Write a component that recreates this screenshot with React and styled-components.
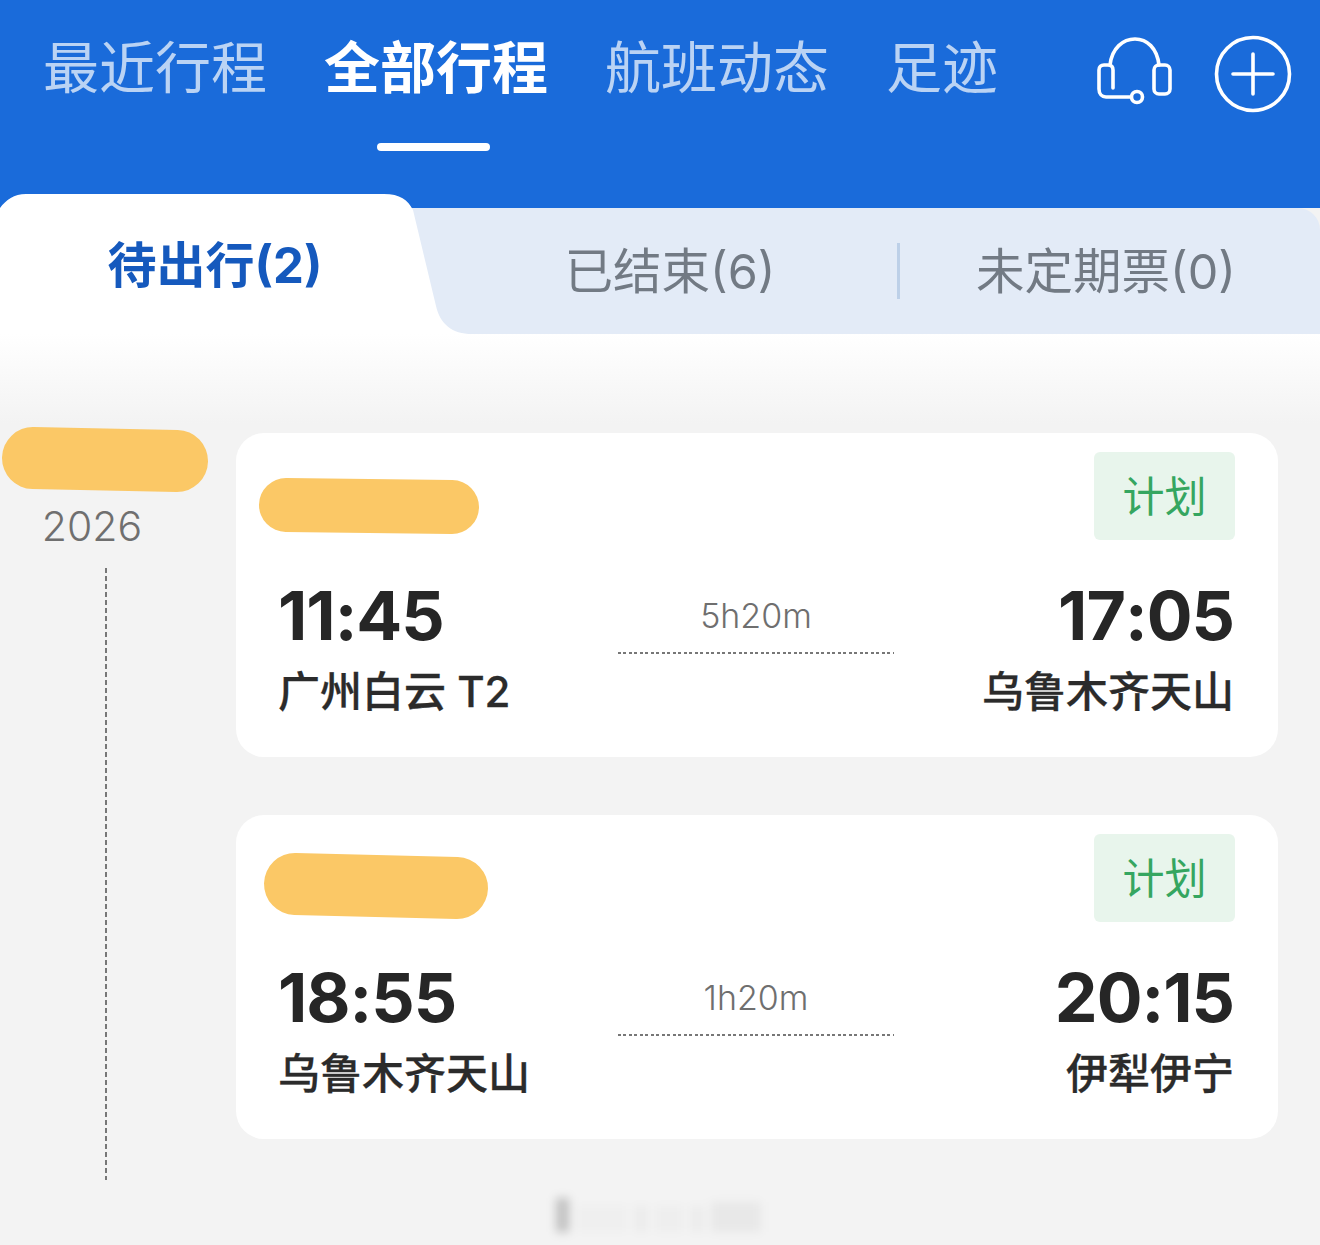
import React from "react";
import styled, { createGlobalStyle } from "styled-components";

const trips = [
  {
    depart: "11:45",
    from: "广州白云 T2",
    duration: "5h20m",
    arrive: "17:05",
    to: "乌鲁木齐天山",
    blob: { w: 222, h: 58, d: "M28 28 L194 30", sw: 54, x: 0, y: 0 },
  },
  {
    depart: "18:55",
    from: "乌鲁木齐天山",
    duration: "1h20m",
    arrive: "20:15",
    to: "伊犁伊宁",
    blob: { w: 226, h: 68, d: "M32 32 L194 36", sw: 62, x: 5, y: -7 },
  },
];

function Headset() {
  return (
    <svg width="76" height="68" viewBox="0 0 76 68" fill="none" stroke="#fff" strokeWidth="3.6" strokeLinecap="round" strokeLinejoin="round">
      <path d="M13 28 C15 11 26 2 38 2 C50 2 60 11 62 28" />
      <path d="M16 51 V33 C16 29.5 14 28 11 28 H7 C4 28 2 30 2 33 V52 C2 57 5 60 9 60 H33" />
      <rect x="57" y="28" width="16" height="29" rx="5" />
      <circle cx="40" cy="60" r="5.5" />
    </svg>
  );
}

function PlusCircle() {
  return (
    <svg width="78" height="78" viewBox="0 0 78 78" fill="none" stroke="#fff" strokeWidth="3.6" strokeLinecap="round">
      <circle cx="39" cy="39" r="36.5" />
      <path d="M19 39 H59 M39 19 V59" />
    </svg>
  );
}

function Blob({ w, h, d, sw }) {
  return (
    <svg width={w} height={h} viewBox={`0 0 ${w} ${h}`}>
      <path d={d} stroke="#fbc866" strokeWidth={sw} strokeLinecap="round" fill="none" />
    </svg>
  );
}

export default function App() {
  return (
    <>
      <GlobalStyle />
      <Page>
        <Header>
          <Nav>
            <NavItem>最近行程</NavItem>
            <NavItem $active>全部行程</NavItem>
            <NavItem>航班动态</NavItem>
            <NavItem>足迹</NavItem>
          </Nav>
          <Actions>
            <Headset />
            <PlusCircle />
          </Actions>
        </Header>

        <TabBar>
          <ActiveTab>待出行(2)</ActiveTab>
          <Tab $width="460px" $divider>已结束(6)</Tab>
          <Tab $width="420px" $pad="8px">未定期票(0)</Tab>
        </TabBar>

        <Body>
          <Timeline>
            <Blob w={208} h={66} d="M32 31 L176 34" sw={62} />
            <Year>2026</Year>
            <DashedLine />
          </Timeline>
          <Cards>
            {trips.map((trip) => (
              <Card key={trip.depart}>
                <CardTop>
                  <BlobSlot $x={trip.blob.x} $y={trip.blob.y}>
                    <Blob {...trip.blob} />
                  </BlobSlot>
                  <Badge>计划</Badge>
                </CardTop>
                <Route>
                  <Stop>
                    <Time>{trip.depart}</Time>
                    <Airport>{trip.from}</Airport>
                  </Stop>
                  <Middle>
                    <Duration>{trip.duration}</Duration>
                    <Dotted />
                  </Middle>
                  <Stop $right>
                    <Time>{trip.arrive}</Time>
                    <Airport>{trip.to}</Airport>
                  </Stop>
                </Route>
              </Card>
            ))}
          </Cards>
        </Body>

        <Watermark>
          <Smudge $w="13px" $h="34px" $o="0.2" />
          <Smudge $w="50px" $h="26px" $o="0.015" />
          <Smudge $w="12px" $h="26px" $o="0.03" />
          <Smudge $w="28px" $h="26px" $o="0.02" />
          <Smudge $w="12px" $h="26px" $o="0.03" />
          <Smudge $w="50px" $h="30px" $o="0.045" />
        </Watermark>
      </Page>
    </>
  );
}

const GlobalStyle = createGlobalStyle`
  html, body {
    margin: 0;
    padding: 0;
    background: #f3f3f3;
  }
  * {
    box-sizing: border-box;
  }
`;

const Page = styled.div`
  width: 1320px;
  height: 1245px;
  overflow: hidden;
  font-family: "Inter", "Noto Sans CJK SC", sans-serif;
  background: #f3f3f3;
`;

const Header = styled.header`
  height: 208px;
  background: #1a6bda;
  display: flex;
  justify-content: space-between;
  align-items: flex-start;
  padding: 0 28px 0 43px;
`;

const Nav = styled.nav`
  display: flex;
  gap: 57px;
`;

const NavItem = styled.div`
  position: relative;
  height: 128px;
  line-height: 128px;
  font-family: "Noto Sans CJK SC", sans-serif;
  font-size: 56px;
  font-weight: ${(p) => (p.$active ? 700 : 400)};
  color: ${(p) => (p.$active ? "#fff" : "rgba(255,255,255,0.7)")};

  &::after {
    content: "";
    display: ${(p) => (p.$active ? "block" : "none")};
    position: absolute;
    left: 53px;
    top: 143px;
    width: 113px;
    height: 8px;
    border-radius: 4px;
    background: #fff;
  }
`;

const Actions = styled.div`
  display: flex;
  align-items: flex-start;
  gap: 41px;
  padding-top: 35px;

  svg:first-child {
    margin-top: 2px;
    margin-left: -1px;
  }
`;

const TabBar = styled.div`
  display: flex;
  height: 126px;
  background: #e3ebf7;
  border-top-right-radius: 22px;
`;

const ActiveTab = styled.div`
  flex: none;
  width: 480px;
  height: 140px;
  margin-top: -14px;
  margin-right: -40px;
  padding: 0 50px 0 0;
  text-align: center;
  line-height: 144px;
  font-size: 49px;
  font-weight: 700;
  color: #1559bd;
  background: #fff;
  clip-path: path("M0 14 C6 6 14 0 26 0 L384 0 C400 0 408 6 413 16 L436 112 C440 130 452 140 472 140 L0 140 Z");
`;

const Tab = styled.div`
  position: relative;
  flex: none;
  width: ${(p) => p.$width};
  padding-right: ${(p) => p.$pad || "0"};
  text-align: center;
  line-height: 128px;
  font-size: 48.5px;
  color: #727a84;

  &::after {
    content: "";
    display: ${(p) => (p.$divider ? "block" : "none")};
    position: absolute;
    right: 0;
    top: 35px;
    width: 3px;
    height: 56px;
    background: #bdd0e8;
  }
`;

const Body = styled.main`
  display: flex;
  height: 886px;
  padding-top: 93px;
  background: linear-gradient(#fff 0, #f3f3f3 90px);
`;

const Timeline = styled.aside`
  flex: none;
  width: 236px;
  padding-left: 1px;
  display: flex;
  flex-direction: column;

  svg {
    flex: none;
  }
`;

const Year = styled.div`
  width: 182px;
  margin-top: 3px;
  text-align: center;
  font-family: "Inter", sans-serif;
  font-size: 41px;
  font-weight: 300;
  line-height: 60px;
  color: #6f6f6f;
`;

const DashedLine = styled.div`
  width: 2px;
  height: 612px;
  margin: 12px 0 0 104px;
  background: repeating-linear-gradient(#777 0, #777 5px, transparent 5px, transparent 8px);
`;

const Cards = styled.div`
  width: 1042px;
  padding-top: 6px;
  display: flex;
  flex-direction: column;
  gap: 58px;
`;

const Card = styled.article`
  height: 324px;
  border-radius: 28px;
  background: #fff;
  padding-top: 19px;
`;

const CardTop = styled.div`
  display: flex;
  justify-content: space-between;
  align-items: flex-start;
  height: 88px;
  padding: 0 43px 0 22px;
`;

const BlobSlot = styled.div`
  margin-top: 25px;
  transform: translate(${(p) => p.$x}px, ${(p) => p.$y}px);
  svg {
    display: block;
  }
`;

const Badge = styled.div`
  width: 141px;
  height: 88px;
  border-radius: 6px;
  background: #e8f5ec;
  color: #35a660;
  text-align: center;
  line-height: 84px;
  font-family: "Noto Sans CJK SC", sans-serif;
  font-size: 42px;
`;

const Route = styled.div`
  display: grid;
  grid-template-columns: 1fr 276px 1fr;
  padding: 37px 44px 0 42px;
`;

const Stop = styled.div`
  text-align: ${(p) => (p.$right ? "right" : "left")};
`;

const Time = styled.div`
  font-family: "Inter", sans-serif;
  font-size: 68px;
  font-weight: 700;
  letter-spacing: -1px;
  font-kerning: none;
  line-height: 76px;
  color: #262626;
`;

const Airport = styled.div`
  margin-top: 12px;
  font-size: 42px;
  font-weight: 500;
  -webkit-text-stroke: 0.3px #2b2b2b;
  line-height: 54px;
  color: #2b2b2b;
`;

const Middle = styled.div`
  display: flex;
  flex-direction: column;
  align-items: stretch;
`;

const Duration = styled.div`
  text-align: center;
  font-family: "Inter", sans-serif;
  font-size: 34px;
  font-weight: 300;
  line-height: 44px;
  margin-top: 17px;
  color: #6f6f6f;
`;

const Dotted = styled.div`
  margin-top: 14px;
  height: 2px;
  background: repeating-linear-gradient(90deg, #777 0, #777 3px, transparent 3px, transparent 5.5px);
`;

const Watermark = styled.div`
  position: absolute;
  left: 556px;
  top: 1198px;
  display: flex;
  align-items: flex-end;
  gap: 8px;
  filter: blur(5px);
`;

const Smudge = styled.div`
  width: ${(p) => p.$w};
  height: ${(p) => p.$h};
  background: rgba(0, 0, 0, ${(p) => p.$o});
`;
